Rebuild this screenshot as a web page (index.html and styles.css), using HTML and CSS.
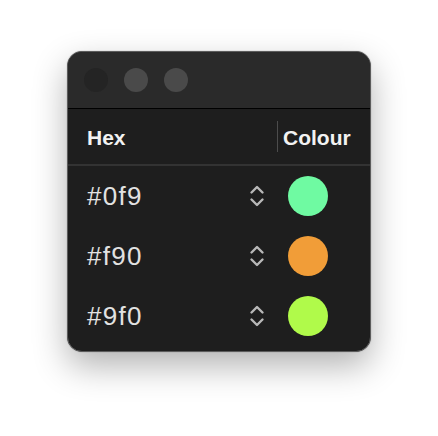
FILE: index.html
```html
<!DOCTYPE html>
<html>
<head>
<meta charset="utf-8">
<link rel="stylesheet" href="styles.css">
</head>
<body>
<div class="window">
  <div class="titlebar">
    <span class="light light-close"></span>
    <span class="light"></span>
    <span class="light"></span>
  </div>
  <div class="table">
    <div class="head head-hex">Hex</div>
    <div class="head head-colour"><span class="divider"></span>Colour</div>

    <div class="cell hex"><span class="value">#0f9</span><svg class="stepper" viewBox="0 0 16 22" width="16" height="22"><path d="M2.5 7.5 L8 2 L13.5 7.5 M2.5 14.5 L8 20 L13.5 14.5"/></svg></div>
    <div class="cell colour"><span class="swatch" style="background:#6ffaa2"></span></div>

    <div class="cell hex"><span class="value">#f90</span><svg class="stepper" viewBox="0 0 16 22" width="16" height="22"><path d="M2.5 7.5 L8 2 L13.5 7.5 M2.5 14.5 L8 20 L13.5 14.5"/></svg></div>
    <div class="cell colour"><span class="swatch" style="background:#f19d38"></span></div>

    <div class="cell hex"><span class="value">#9f0</span><svg class="stepper" viewBox="0 0 16 22" width="16" height="22"><path d="M2.5 7.5 L8 2 L13.5 7.5 M2.5 14.5 L8 20 L13.5 14.5"/></svg></div>
    <div class="cell colour"><span class="swatch" style="background:#b0fa4a"></span></div>
  </div>
</div>
</body>
</html>
```
FILE: styles.css
```css
html, body {
  margin: 0;
  padding: 0;
  background: #ffffff;
}
body {
  width: 438px;
  height: 436px;
  font-family: "Liberation Sans", Arial, sans-serif;
}
.window {
  box-sizing: border-box;
  width: 304px;
  height: 301px;
  margin: 51px auto 0;
  background: #1e1e1e;
  border: 1px solid #5c5c5c;
  border-radius: 15px;
  overflow: hidden;
  box-shadow: 0 14px 34px rgba(0, 0, 0, 0.3), 0 0 1px rgba(0, 0, 0, 0.5);
}
.titlebar {
  height: 56px;
  background: #2a2a2a;
  border-bottom: 1px solid #000;
  display: flex;
  align-items: center;
  gap: 16px;
  padding-left: 16px;
}
.light {
  width: 24px;
  height: 24px;
  border-radius: 50%;
  background: #4a4a4a;
}
.light-close {
  background: #242424;
}
.table {
  display: grid;
  grid-template-columns: 209px 1fr;
  grid-template-rows: 57px 60px 60px 60px;
}
.head {
  display: flex;
  align-items: center;
  color: #f2f2f2;
  font-weight: bold;
  font-size: 21px;
  border-bottom: 2px solid #333333;
  padding-top: 3px;
}
.head-hex {
  padding-left: 19px;
}
.head-colour {
  gap: 5px;
}
.divider {
  width: 1px;
  height: 31px;
  background: #4c4c4c;
  margin-top: -3px;
}
.cell {
  display: flex;
  align-items: center;
}
.hex {
  padding-left: 19px;
  padding-right: 12px;
  justify-content: space-between;
}
.value {
  color: #e2e2e2;
  font-size: 26px;
  letter-spacing: 1.3px;
}
.stepper {
  fill: none;
  stroke: #b8b8b8;
  stroke-width: 2.4;
  stroke-linecap: round;
  stroke-linejoin: round;
}
.colour {
  padding-left: 11px;
}
.swatch {
  width: 40px;
  height: 40px;
  border-radius: 50%;
}
```
